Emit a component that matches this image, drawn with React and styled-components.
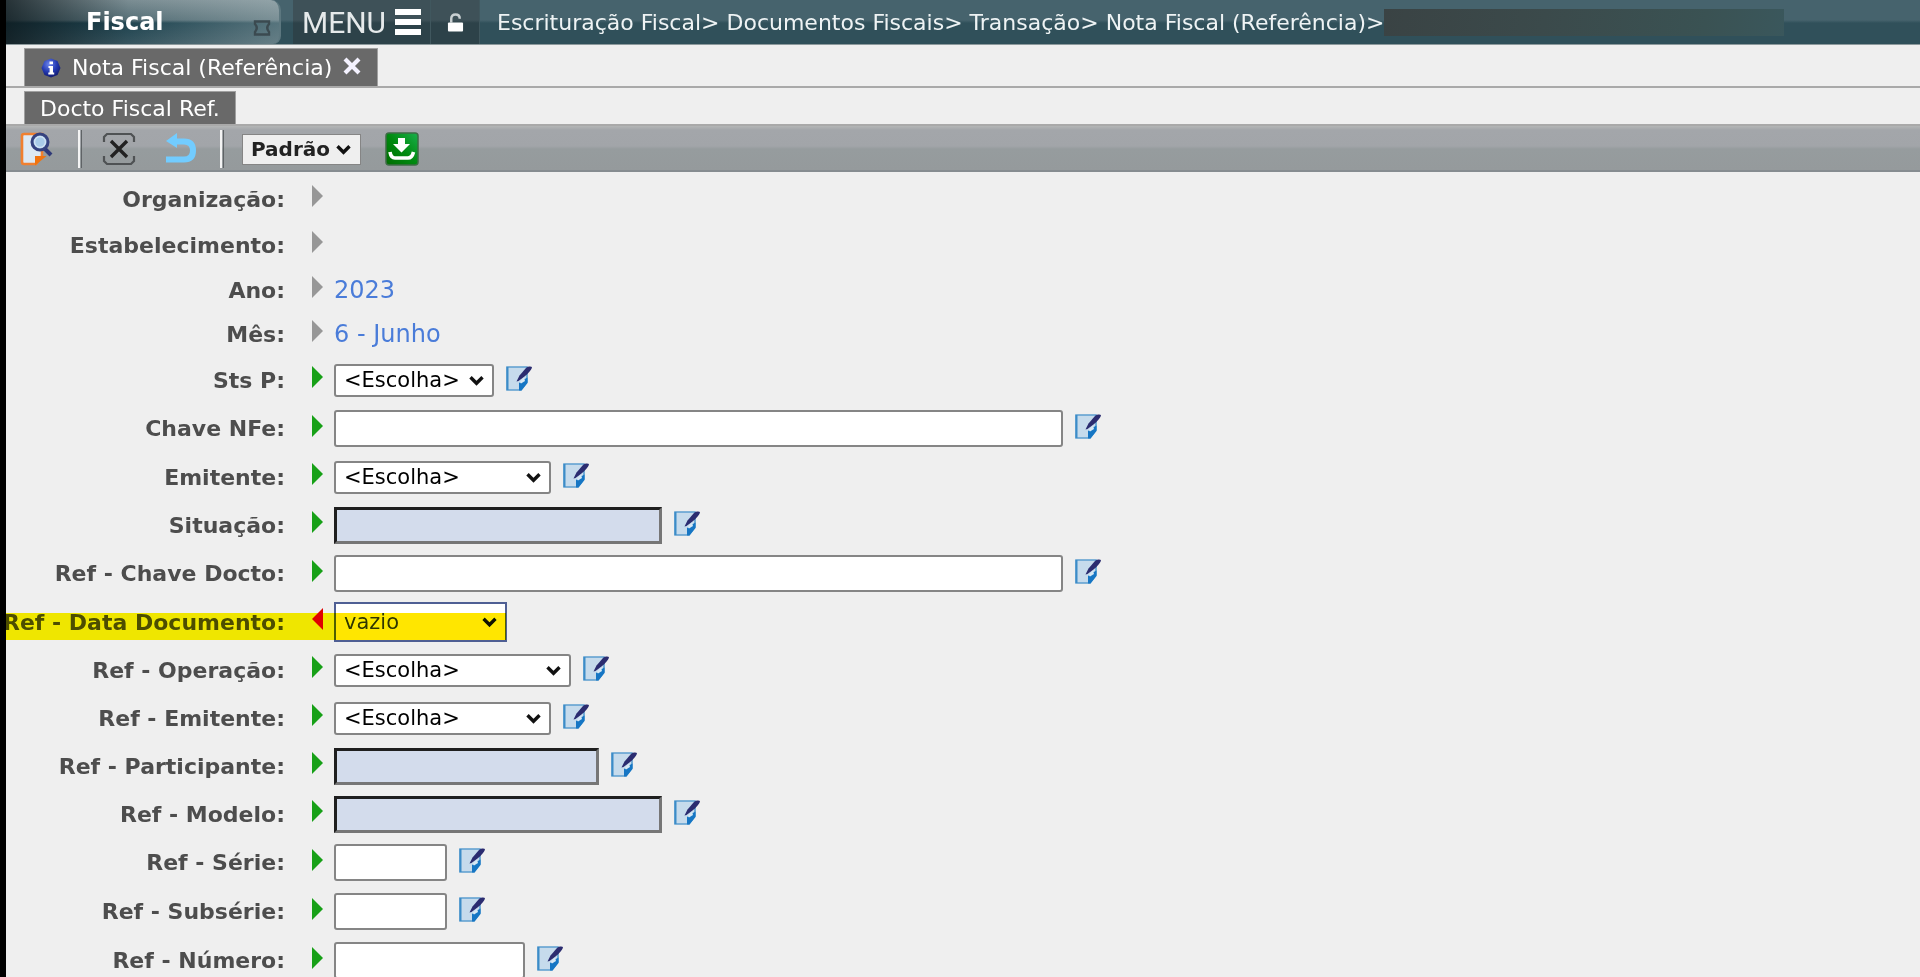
import React from 'react'
import styled, { createGlobalStyle } from 'styled-components'

const Global = createGlobalStyle`
  * {
    box-sizing: border-box;
  }
  html {
    scrollbar-width: none;
  }
  body {
    margin: 0;
    background: #efefef;
    font-family: 'DejaVu Sans', Verdana, sans-serif;
    font-size: 22px;
  }
  button, input, select {
    font-family: inherit;
    margin: 0;
  }
`

const Page = styled.div`
  min-height: 100vh;
  border-left: 6px solid #000;
  overflow: hidden;
`

/* top bar */

const Header = styled.header`
  display: flex;
  align-items: stretch;
  height: 45px;
  background: linear-gradient(#46636d 0, #46636d 20px, #30505a 23px, #30505a 100%);
  border-bottom: 1px solid #8d9a9d;
`

const Module = styled.div`
  display: flex;
  align-items: center;
  width: 275px;
  padding: 0 8px 0 80px;
  border-radius: 0 10px 8px 0;
  border-right: 2px solid #5c777f;
  background:
    linear-gradient(90deg, rgba(10, 20, 24, 0.75) 0, rgba(10, 20, 24, 0) 45%, rgba(190, 205, 208, 0.35) 100%),
    linear-gradient(#7b8d93 0, #566f77 20px, #1f4450 23px, #37555f 100%);
`

const ModuleName = styled.strong`
  flex: 1;
  color: #fff;
  font-size: 24px;
`

const PinIcon = styled.svg`
  width: 18px;
  height: 16px;
  margin-top: 12px;
`

const HeaderButton = styled.button`
  display: flex;
  align-items: center;
  justify-content: center;
  gap: 9px;
  width: ${props => props.$width};
  margin-left: ${props => props.$gap || '0'};
  padding: 0;
  border: 0;
  border-right: 1px solid #40575e;
  background: linear-gradient(#3e5158 0, #3e5158 20px, #2d4249 23px, #2d4249 100%);
  color: #e6eaeb;
  font-family: Roboto, 'Liberation Sans', sans-serif;
  font-size: 30px;
`

const Breadcrumb = styled.nav`
  display: flex;
  align-items: center;
  padding-left: 17px;
  gap: 7px;
  color: #eef3f4;
  font-size: 22px;
  white-space: nowrap;

  a {
    color: inherit;
    text-decoration: none;
  }
`

const Masked = styled.span`
  width: 400px;
  height: 27px;
  align-self: center;
  background: linear-gradient(100deg, #3a4344 0, #3b4a4b 40%, #3a5253 80%, #3a575c 100%);
`

/* tabs */

const TabStrip = styled.div`
  display: flex;
  height: ${props => props.$height};
  padding: 3px 0 0 18px;
  border-bottom: 2px solid #a9a9a9;
`

const Tab = styled.div`
  display: flex;
  align-items: center;
  gap: ${props => props.$gap || '0'};
  padding: 0 ${props => props.$pad};
  border: 1px solid #a0a0a0;
  border-bottom: 0;
  background: #696969;
  color: #fff;
  font-size: 22px;
  white-space: nowrap;
`

const TabLink = styled.a`
  color: inherit;
  text-decoration: none;
`

const CloseButton = styled.button`
  display: flex;
  padding: 0 0 4px;
  border: 0;
  background: none;
`

/* toolbar */

const Toolbar = styled.div`
  display: flex;
  align-items: center;
  height: 46px;
  padding: 2px 14px 0;
  background: linear-gradient(#b4b6b6 0, #a3a6aa 4px, #a2a5a9 20px, #969c9e 23px, #959a9c 100%);
  border-bottom: 2px solid #868c90;
`

const ToolButton = styled.button`
  display: flex;
  width: 34px;
  height: 34px;
  margin-left: ${props => props.$before || '0'};
  margin-right: ${props => props.$after || '0'};
  padding: 0;
  border: 0;
  background: none;
`

const Separator = styled.span`
  width: 4px;
  height: 38px;
  margin-right: 18px;
  border-left: 2px solid #f4f4f4;
  border-right: 1px solid #5f6366;
`

/* form */

const Form = styled.form`
  padding-top: 4px;
`

const Row = styled.div`
  position: relative;
  display: grid;
  grid-template-columns: 306px 22px 1fr;
  align-items: center;
  height: ${props => props.$height};
`

const Label = styled.label`
  display: flex;
  justify-content: flex-end;
  padding-right: 27px;
  color: #4d4d4d;
  font-size: 22px;
  font-weight: bold;
  white-space: nowrap;
`

const Marker = styled.svg`
  display: block;
  width: 11px;
  height: 22px;
  margin-bottom: 6px;
`

const Field = styled.div`
  display: flex;
  align-items: center;
  gap: 12px;
`

const Value = styled.output`
  color: #4a7cd9;
  font-size: 24px;
`

const TextInput = styled.input`
  width: ${props => props.$width};
  height: 37px;
  padding: 0 8px;
  border: 2px solid #858585;
  border-radius: 3px;
  background: #fff;
  font-size: 21px;
`

const LookupInput = styled(TextInput)`
  border: 3px solid;
  border-color: #1f1f1f #767676 #767676 #1f1f1f;
  border-radius: 0;
  background: #d3dcec;
`

const SelectBox = styled.span`
  position: relative;
  display: inline-flex;
  width: ${props => props.$width};

  svg {
    position: absolute;
    top: 0;
    right: 10px;
    height: 100%;
    pointer-events: none;
  }
`

const Select = styled.select`
  appearance: none;
  width: 100%;
  height: 33px;
  padding: 0 0 0 8px;
  border: 2px solid #858585;
  border-radius: 3px;
  background: #fff;
  color: #000;
  font-size: 21px;
`

const DateSelect = styled(Select)`
  height: 40px;
  border-color: #4f5f94;
  border-radius: 0;
  color: #333;
`

const ViewSelect = styled(Select)`
  height: 31px;
  border: 1px solid #858585;
  border-radius: 0;
  background: #efefef;
  color: #222;
  font-size: 20px;
  font-weight: bold;
`

const EditButton = styled.button`
  display: flex;
  padding: 0 0 4px;
  border: 0;
  background: none;
`

// marker pen stroke drawn over the row
const Highlight = styled.span`
  position: absolute;
  left: 0;
  top: 15px;
  width: 500px;
  height: 27px;
  background: #ffe600;
  mix-blend-mode: darken;
  pointer-events: none;
`

const Chevron = () => (
  <svg width="15" height="10" viewBox="0 0 15 10">
    <path d="M1.5 1.8 L7.5 7.8 L13.5 1.8" fill="none" stroke="#111" strokeWidth="3.4" />
  </svg>
)

const EditIcon = () => (
  <svg width="26" height="25" viewBox="0 0 26 25">
    <path d="M1 1 H21 V16 L15 24 H1 Z" fill="#c6dbec" stroke="#5c9fd0" strokeWidth="1.6" />
    <path d="M1.5 1 V24" stroke="#3c8cc8" strokeWidth="2" />
    <path d="M13 24.5 V17 L17 14 L21.5 11.5 V17 L15.5 24.5 Z" fill="#1676c4" />
    <path d="M13.5 16 L18 11.5 L19 15 L15 17.5 Z" fill="#d8e8f4" />
    <path d="M10.5 15.5 L13.5 9.5 L20 2 C22 .3 25 .2 26 1 C25.5 4 21.5 8 18.5 10.5 L12.5 15 Z" fill="#2b2c70" />
  </svg>
)

const SearchDocIcon = () => (
  <svg width="34" height="34" viewBox="0 0 34 34">
    <path d="M4 2 H22 V24 L16 32 H4 Q2 32 2 30 V4 Q2 2 4 2 Z" fill="#dce9f4" stroke="#f08030" strokeWidth="2.6" />
    <path d="M15 33.5 V24 H26.5 Z" fill="#f07410" />
    <path d="M25 17 L31 23" stroke="#2f3a78" strokeWidth="4" />
    <circle cx="20" cy="10" r="8" fill="#a9cbe8" stroke="#35427f" strokeWidth="3" />
    <circle cx="20" cy="10" r="5.4" fill="none" stroke="#d6e6f4" strokeWidth="1.2" />
  </svg>
)

const ClearIcon = () => (
  <svg width="34" height="34" viewBox="0 0 34 34" fill="none">
    <path
      d="M2 10 V5 L5 2 H29 L32 5 V10 M2 24 V29 L5 32 H29 L32 29 V24"
      stroke="#4f5254"
      strokeWidth="2.2"
    />
    <path d="M9 9 L25 25 M25 9 L9 25" stroke="#222" strokeWidth="3.4" />
  </svg>
)

const UndoIcon = () => (
  <svg width="34" height="34" viewBox="0 0 34 34">
    <path d="M9 9.5 H20 Q29 9.500 29 18.500 Q29 27.500 20 27.500 H2" fill="none" stroke="#72ccff" strokeWidth="6" />
    <path d="M2 9 L13 1 V16 Z" fill="#72ccff" />
  </svg>
)

const DownloadIcon = () => (
  <svg width="34" height="34" viewBox="0 0 34 34">
    <defs>
      <linearGradient id="green" x1="0" y1="1" x2="1" y2="0">
        <stop offset="0" stopColor="#006c00" />
        <stop offset=".5" stopColor="#008a10" />
        <stop offset="1" stopColor="#1ab04c" />
      </linearGradient>
    </defs>
    <rect x="1" y="1" width="32" height="32" rx="3" fill="url(#green)" stroke="#3c6c44" strokeWidth="1.5" />
    <path d="M13 6 H20 V12 H25 L16.5 20.5 L8 12 H13 Z" fill="#fff" />
    <path d="M5 20 Q6 26 10 26 H23 Q27 26 28.5 20" fill="none" stroke="#fff" strokeWidth="3.6" />
  </svg>
)

const InfoIcon = () => (
  <svg width="20" height="20" viewBox="0 0 20 20">
    <defs>
      <radialGradient id="info" cx=".4" cy=".3" r=".7">
        <stop offset="0" stopColor="#6d86ee" />
        <stop offset=".6" stopColor="#2338b0" />
        <stop offset="1" stopColor="#131c70" />
      </radialGradient>
    </defs>
    <path d="M10 .5 L16.5 3 L19.5 10 L16.5 17 L10 19.5 L3.5 17 L.5 10 L3.5 3 Z" fill="url(#info)" />
    <path d="M8.5 3.5 H12 V6.3 H8.5 Z M7.5 8 H12 V14.5 H13.2 V16.5 H7.3 V14.5 H8.6 V10 H7.5 Z" fill="#fff" />
  </svg>
)

const CloseIcon = () => (
  <svg width="18" height="18" viewBox="0 0 18 18">
    <path d="M2 2 L16 16 M16 2 L2 16" stroke="#f4f2ff" strokeWidth="4.2" />
  </svg>
)

const MenuIcon = () => (
  <svg width="26" height="28" viewBox="0 0 26 28">
    <path d="M0 4 H26 M0 14 H26 M0 24 H26" stroke="#fff" strokeWidth="6" />
  </svg>
)

const LockIcon = () => (
  <svg width="17" height="19" viewBox="0 0 18 20">
    <path d="M4.5 10 V6 Q4.5 1.5 9 1.5 Q13.5 1.5 13.5 6" fill="none" stroke="#c9d0d2" strokeWidth="2.6" />
    <rect x="1" y="10" width="16" height="9.5" rx="1" fill="#fff" />
  </svg>
)

const fields = [
  { label: 'Organização', type: 'static', height: '46px', value: '' },
  { label: 'Estabelecimento', type: 'static', height: '46px', value: '' },
  { label: 'Ano', type: 'static', height: '44px', value: '2023' },
  { label: 'Mês', type: 'static', height: '44px', value: '6 - Junho' },
  { label: 'Sts P', type: 'select', width: '160px' },
  { label: 'Chave NFe', type: 'text', width: '729px' },
  { label: 'Emitente', type: 'select', width: '217px' },
  { label: 'Situação', type: 'lookup', width: '328px' },
  { label: 'Ref - Chave Docto', type: 'text', width: '729px' },
  { label: 'Ref - Data Documento', type: 'date', width: '173px' },
  { label: 'Ref - Operação', type: 'select', width: '237px' },
  { label: 'Ref - Emitente', type: 'select', width: '217px' },
  { label: 'Ref - Participante', type: 'lookup', width: '265px' },
  { label: 'Ref - Modelo', type: 'lookup', width: '328px' },
  { label: 'Ref - Série', type: 'text', width: '113px' },
  { label: 'Ref - Subsérie', type: 'text', width: '113px' },
  { label: 'Ref - Número', type: 'text', width: '191px' },
]

function FieldMarker({ type }) {
  if (type === 'date') {
    return (
      <Marker viewBox="0 0 11 22">
        <path d="M11 0 V22 L0 11 Z" fill="#e00000" />
      </Marker>
    )
  }
  return (
    <Marker viewBox="0 0 11 22">
      <path d="M0 0 V22 L11 11 Z" fill={type === 'static' ? '#979797' : '#17a017'} />
    </Marker>
  )
}

function Control({ id, field }) {
  switch (field.type) {
    case 'static':
      return <Value id={id}>{field.value}</Value>
    case 'select':
      return (
        <SelectBox $width={field.width}>
          <Select id={id}>
            <option>&lt;Escolha&gt;</option>
          </Select>
          <Chevron />
        </SelectBox>
      )
    case 'date':
      return (
        <SelectBox $width={field.width}>
          <DateSelect id={id}>
            <option>vazio</option>
          </DateSelect>
          <Chevron />
        </SelectBox>
      )
    case 'lookup':
      return <LookupInput id={id} $width={field.width} readOnly />
    default:
      return <TextInput id={id} $width={field.width} />
  }
}

function FormRow({ id, field }) {
  const { type } = field
  const isDate = type === 'date'
  const height = field.height || (type === 'text' ? '49px' : '48px')

  return (
    <Row $height={height}>
      <Label htmlFor={id}>{field.label}:</Label>
      <FieldMarker type={type} />
      <Field>
        <Control id={id} field={field} />
        {type !== 'static' && !isDate && (
          <EditButton type="button" aria-label={'Editar ' + field.label}>
            <EditIcon />
          </EditButton>
        )}
      </Field>
      {isDate && <Highlight />}
    </Row>
  )
}

export default function App() {
  return <Page>
    <Global />

    <Header>
      <Module>
        <ModuleName>Fiscal</ModuleName>
        <PinIcon viewBox="0 0 18 16">
          <path
            d="M2 1.5 H16 V4 Q12.5 8 16 12 V14.5 H2 V12 Q5.5 8 2 4 Z"
            fill="none"
            stroke="#3b4a50"
            strokeWidth="2.4"
          />
        </PinIcon>
      </Module>
      <HeaderButton $width="138px" $gap="12px">
        MENU
        <MenuIcon />
      </HeaderButton>
      <HeaderButton $width="49px" aria-label="Bloquear">
        <LockIcon />
      </HeaderButton>
      <Breadcrumb>
        <a href="#escrituracao">Escrituração Fiscal&gt;</a>
        <a href="#documentos">Documentos Fiscais&gt;</a>
        <a href="#transacao">Transação&gt;</a>
        <a href="#nota">Nota Fiscal (Referência)&gt;</a>
      </Breadcrumb>
      <Masked />
    </Header>

    <TabStrip $height="43px">
      <Tab $pad="16px" $gap="11px">
        <InfoIcon />
        <TabLink href="#nota">Nota Fiscal (Referência)</TabLink>
        <CloseButton aria-label="Fechar">
          <CloseIcon />
        </CloseButton>
      </Tab>
    </TabStrip>
    <TabStrip $height="38px">
      <Tab $pad="15px">
        <TabLink href="#docto">Docto Fiscal Ref.</TabLink>
      </Tab>
    </TabStrip>

    <Toolbar>
      <ToolButton $after="24px" aria-label="Pesquisar">
        <SearchDocIcon />
      </ToolButton>
      <Separator />
      <ToolButton $before="2px" $after="28px" aria-label="Limpar">
        <ClearIcon />
      </ToolButton>
      <ToolButton $after="22px" aria-label="Desfazer">
        <UndoIcon />
      </ToolButton>
      <Separator />
      <SelectBox $width="119px">
        <ViewSelect aria-label="Visão">
          <option>Padrão</option>
        </ViewSelect>
        <Chevron />
      </SelectBox>
      <ToolButton $before="24px" aria-label="Exportar">
        <DownloadIcon />
      </ToolButton>
    </Toolbar>

    <Form>
      {fields.map((field, i) => (
        <FormRow key={field.label} id={'campo' + i} field={field} />
      ))}
    </Form>
  </Page>
}
